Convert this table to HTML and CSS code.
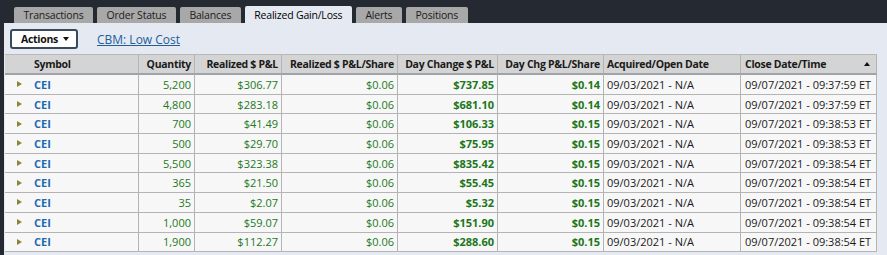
FILE: index.html
```html
<!DOCTYPE html>
<html>
<head>
<meta charset="utf-8">
<link rel="stylesheet" href="styles.css">
</head>
<body>
<div class="app">
  <div class="tabs">
    <div class="tab">Transactions</div>
    <div class="tab">Order Status</div>
    <div class="tab">Balances</div>
    <div class="tab active">Realized Gain/Loss</div>
    <div class="tab">Alerts</div>
    <div class="tab">Positions</div>
  </div>
  <div class="panel">
    <div class="toolbar">
      <button class="actions">Actions <span class="caret"></span></button>
      <a class="link" href="#">CBM: Low Cost</a>
    </div>
    <div class="grid">
      <div class="hd left sym">Symbol</div>
      <div class="hd">Quantity</div>
      <div class="hd">Realized $ P&amp;L</div>
      <div class="hd">Realized $ P&amp;L/Share</div>
      <div class="hd">Day Change $ P&amp;L</div>
      <div class="hd">Day Chg P&amp;L/Share</div>
      <div class="hd left">Acquired/Open Date</div>
      <div class="hd left sorted">Close Date/Time<span class="sort"></span></div>

      <div class="c sym"><span class="exp"></span><span class="tk">CEI</span></div>
      <div class="c num">5,200</div><div class="c num">$306.77</div><div class="c num">$0.06</div><div class="c num b">$737.85</div><div class="c num b">$0.14</div><div class="c dt">09/03/2021 - N/A</div><div class="c dt cl">09/07/2021 - 09:37:59 ET</div>

      <div class="c sym"><span class="exp"></span><span class="tk">CEI</span></div>
      <div class="c num">4,800</div><div class="c num">$283.18</div><div class="c num">$0.06</div><div class="c num b">$681.10</div><div class="c num b">$0.14</div><div class="c dt">09/03/2021 - N/A</div><div class="c dt cl">09/07/2021 - 09:37:59 ET</div>

      <div class="c sym"><span class="exp"></span><span class="tk">CEI</span></div>
      <div class="c num">700</div><div class="c num">$41.49</div><div class="c num">$0.06</div><div class="c num b">$106.33</div><div class="c num b">$0.15</div><div class="c dt">09/03/2021 - N/A</div><div class="c dt cl">09/07/2021 - 09:38:53 ET</div>

      <div class="c sym"><span class="exp"></span><span class="tk">CEI</span></div>
      <div class="c num">500</div><div class="c num">$29.70</div><div class="c num">$0.06</div><div class="c num b">$75.95</div><div class="c num b">$0.15</div><div class="c dt">09/03/2021 - N/A</div><div class="c dt cl">09/07/2021 - 09:38:53 ET</div>

      <div class="c sym"><span class="exp"></span><span class="tk">CEI</span></div>
      <div class="c num">5,500</div><div class="c num">$323.38</div><div class="c num">$0.06</div><div class="c num b">$835.42</div><div class="c num b">$0.15</div><div class="c dt">09/03/2021 - N/A</div><div class="c dt cl">09/07/2021 - 09:38:54 ET</div>

      <div class="c sym"><span class="exp"></span><span class="tk">CEI</span></div>
      <div class="c num">365</div><div class="c num">$21.50</div><div class="c num">$0.06</div><div class="c num b">$55.45</div><div class="c num b">$0.15</div><div class="c dt">09/03/2021 - N/A</div><div class="c dt cl">09/07/2021 - 09:38:54 ET</div>

      <div class="c sym"><span class="exp"></span><span class="tk">CEI</span></div>
      <div class="c num">35</div><div class="c num">$2.07</div><div class="c num">$0.06</div><div class="c num b">$5.32</div><div class="c num b">$0.15</div><div class="c dt">09/03/2021 - N/A</div><div class="c dt cl">09/07/2021 - 09:38:54 ET</div>

      <div class="c sym"><span class="exp"></span><span class="tk">CEI</span></div>
      <div class="c num">1,000</div><div class="c num">$59.07</div><div class="c num">$0.06</div><div class="c num b">$151.90</div><div class="c num b">$0.15</div><div class="c dt">09/03/2021 - N/A</div><div class="c dt cl">09/07/2021 - 09:38:54 ET</div>

      <div class="c sym"><span class="exp"></span><span class="tk">CEI</span></div>
      <div class="c num">1,900</div><div class="c num">$112.27</div><div class="c num">$0.06</div><div class="c num b">$288.60</div><div class="c num b">$0.15</div><div class="c dt">09/03/2021 - N/A</div><div class="c dt cl">09/07/2021 - 09:38:54 ET</div>
    </div>
  </div>
</div>
</body>
</html>
```
FILE: styles.css
```css
html, body {
  margin: 0;
  padding: 0;
  background: #242932;
  height: 100%;
  overflow: hidden;
}
.app {
  width: 887px;
  height: 255px;
  font-family: "Open Sans", "Noto Sans", sans-serif;
  font-size: 11px;
  color: #1a1a1a;
  display: flex;
  flex-direction: column;
}
.tabs {
  height: 23px;
  display: flex;
  align-items: flex-end;
  gap: 4px;
  padding-left: 14px;
  box-sizing: border-box;
}
.tab {
  height: 16px;
  line-height: 16px;
  padding: 0 9.5px;
  font-size: 10.5px;
  letter-spacing: -0.2px;
  background: #a8a8a8;
  color: #1c1c1c;
  border-radius: 2px 2px 0 0;
  white-space: nowrap;
}
.tab.active {
  height: 17px;
  line-height: 18px;
  background: #e4e9f2;
  color: #000;
}
.panel {
  flex: 1;
  margin-left: 4px;
  background: #e4e9f2;
  display: flex;
  flex-direction: column;
}
.toolbar {
  height: 31px;
  display: flex;
  align-items: center;
  padding-left: 6px;
  gap: 19px;
}
.actions {
  width: 68px;
  height: 20px;
  margin-top: 1px;
  box-sizing: border-box;
  border: 2px solid #3a4a5c;
  border-radius: 3px;
  background: #fff;
  font-family: inherit;
  font-size: 10.5px;
  letter-spacing: -0.3px;
  font-weight: 700;
  color: #111;
  padding: 0 0 0 9px;
  display: flex;
  align-items: center;
  gap: 5px;
}
.caret {
  width: 0;
  height: 0;
  border-left: 3px solid transparent;
  border-right: 3px solid transparent;
  border-top: 4px solid #111;
}
.link {
  font-size: 12px;
  color: #1f5d9b;
  text-decoration: underline;
  margin-top: 2px;
}
.grid {
  margin-left: 1px;
  width: 872px;
  display: grid;
  grid-template-columns: 134px 56px 87px 116px 100px 106px 137px 136px;
  grid-template-rows: 21px;
  grid-auto-rows: 19.7px;
  background: #f7f7f7;
}
.hd {
  box-sizing: border-box;
  background: #d4d4d4;
  border-top: 1px solid #b8b8b8;
  border-bottom: 2px solid #9ea3aa;
  border-right: 1px solid #b4b4b4;
  font-weight: 700;
  font-size: 10.5px;
  letter-spacing: -0.3px;
  display: flex;
  align-items: center;
  justify-content: flex-end;
  padding: 0 3px;
  white-space: nowrap;
  overflow: hidden;
}
.hd.left { justify-content: flex-start; }
.hd.sym { padding-left: 29px; }
.hd.sorted { justify-content: space-between; padding-left: 4px; padding-right: 6px; }
.sort {
  width: 0;
  height: 0;
  border-left: 3px solid transparent;
  border-right: 3px solid transparent;
  border-bottom: 4px solid #111;
}
.c {
  box-sizing: border-box;
  border-bottom: 1px solid #b4b4b4;
  border-right: 1px solid #b4b4b4;
  display: flex;
  align-items: center;
  padding: 0 3px;
  white-space: nowrap;
  overflow: hidden;
}
.c.num {
  justify-content: flex-end;
  color: #23791c;
}
.c.num.b { font-weight: 700; color: #1c761a; }
.c.dt { color: #1a1a1a; }
.c.cl { padding-left: 4px; }
.c.sym { padding-left: 12px; gap: 12px; }
.exp {
  width: 0;
  height: 0;
  border-top: 3.5px solid transparent;
  border-bottom: 3.5px solid transparent;
  border-left: 5px solid #8a8638;
}
.tk {
  font-weight: 700;
  color: #1b6ab2;
}
```
